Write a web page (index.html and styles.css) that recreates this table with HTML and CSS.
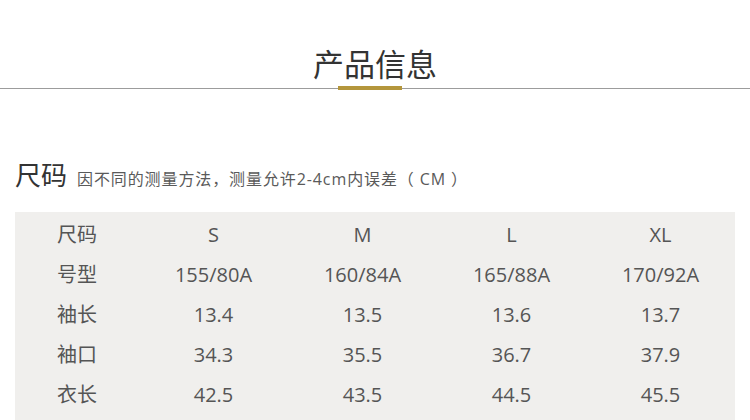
FILE: index.html
```html
<!DOCTYPE html>
<html lang="zh-CN">
<head>
<meta charset="utf-8">
<title>产品信息</title>
<link rel="stylesheet" href="styles.css">
</head>
<body>
<header class="head">
  <h1 class="title">产品信息</h1>
</header>
<section class="size">
  <div class="sec-head">
    <h2 class="sec-title">尺码</h2>
    <span class="sec-note">因不同的测量方法，测量允许2-4cm内误差（ CM ）</span>
  </div>
  <div class="table">
    <div class="row"><span>尺码</span><span>S</span><span>M</span><span>L</span><span>XL</span></div>
    <div class="row"><span>号型</span><span>155/80A</span><span>160/84A</span><span>165/88A</span><span>170/92A</span></div>
    <div class="row"><span>袖长</span><span>13.4</span><span>13.5</span><span>13.6</span><span>13.7</span></div>
    <div class="row"><span>袖口</span><span>34.3</span><span>35.5</span><span>36.7</span><span>37.9</span></div>
    <div class="row"><span>衣长</span><span>42.5</span><span>43.5</span><span>44.5</span><span>45.5</span></div>
  </div>
</section>
</body>
</html>
```
FILE: styles.css
```css
html, body {
  margin: 0;
  padding: 0;
  background: #ffffff;
}
body {
  font-family: "Open Sans", "Noto Sans CJK SC", sans-serif;
  width: 750px;
  height: 420px;
  overflow: hidden;
}
.head {
  padding-top: 43px;
  height: 45px;
  border-bottom: 1px solid #9c9c9c;
  display: flex;
  justify-content: center;
}
.title {
  position: relative;
  margin: 0;
  font-family: "Noto Sans CJK SC", sans-serif;
  font-weight: normal;
  font-size: 31px;
  line-height: 40px;
  height: 40px;
  color: #333333;
}
.title::after {
  content: "";
  position: absolute;
  left: 50%;
  top: 43px;
  width: 64px;
  height: 4px;
  margin-left: -37px;
  background: #b4963c;
}
.size {
  padding: 0 15px;
}
.sec-head {
  display: flex;
  align-items: baseline;
  margin-top: 67px;
  height: 36px;
}
.sec-title {
  margin: 0;
  font-family: "Noto Sans CJK SC", sans-serif;
  font-weight: normal;
  font-size: 26px;
  line-height: 36px;
  color: #333333;
}
.sec-note {
  margin-left: 10px;
  font-size: 16px;
  letter-spacing: 0.9px;
  line-height: 36px;
  color: #5a5a5a;
  white-space: pre;
}
.table {
  margin-top: 20px;
  background: #f0efed;
  padding: 3px 0 10px;
}
.row {
  display: grid;
  grid-template-columns: 124px repeat(4, 149px);
  height: 40px;
  align-items: center;
  font-size: 20px;
  color: #555555;
}
.row span {
  text-align: center;
  line-height: 40px;
}
```
